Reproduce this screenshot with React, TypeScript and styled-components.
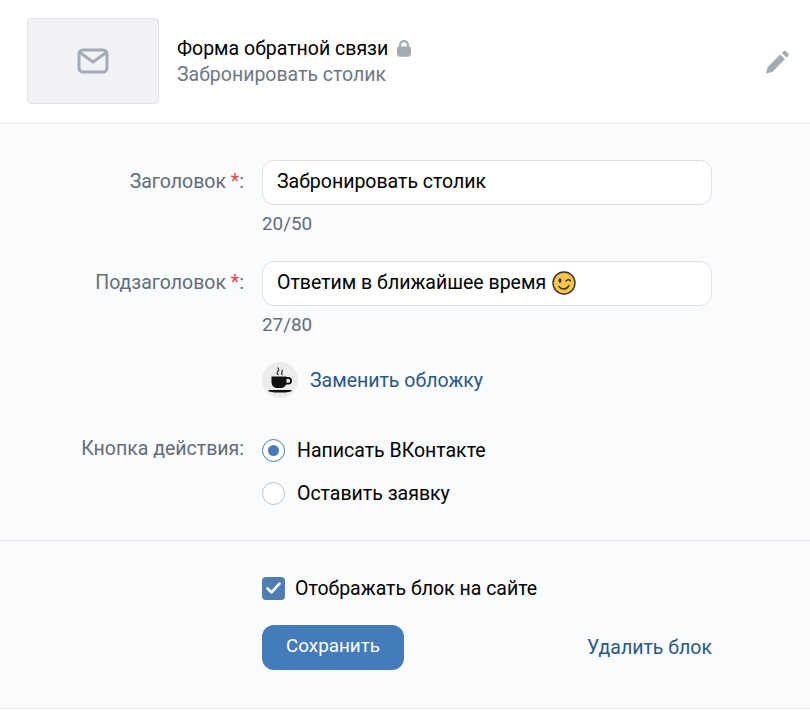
import React from "react";
import styled, { createGlobalStyle } from "styled-components";

const Global = createGlobalStyle`
  html, body { margin: 0; padding: 0; background: #fff; }
  body { font-family: Roboto, "Liberation Sans", sans-serif; font-size: 19.5px; color: #000; }
`;
const Page = styled.div`width: 810px; height: 710px; overflow: hidden; background: #fff;`;
const Header = styled.header`
  height: 123px; display: flex; align-items: center; padding: 0 21px 0 27px;
  border-bottom: 1px solid #e7e8ec; background: #fff;
`;
const Cover = styled.div`
  width: 132px; height: 86px; box-sizing: border-box; border: 1px solid #e1e3e6; border-radius: 4px;
  background: #f0f2f5; display: flex; align-items: center; justify-content: center; margin-right: 18px; margin-bottom: 1px;
`;
const HeaderText = styled.div`flex: 1; display: flex; flex-direction: column; gap: 2px;`;
const Title = styled.div`display: flex; align-items: center; gap: 8px; line-height: 24px; height: 24px;`;
const Subtitle = styled.div`color: #6d7885; line-height: 24px; height: 24px;`;
const Body = styled.div`background: #fafbfd; border-bottom: 1px solid #e7e8ec; padding-bottom: 38px;`;
const Section = styled.section<{ $pad?: string }>`padding: ${p => p.$pad || "0"};`;
const Row = styled.div<{ $mb?: number }>`
  display: grid; grid-template-columns: 244px 450px; column-gap: 18px; margin-bottom: ${p => p.$mb ?? 0}px;
`;
const Label = styled.div<{ $flush?: boolean }>`
  text-align: right; color: #626d7a; line-height: 24px; padding-top: ${p => (p.$flush ? 0 : 10)}px;
  margin-top: ${p => (p.$flush ? -1 : 0)}px;
`;
const Star = styled.span`color: #e64646;`;
const Input = styled.div`
  height: 45px; box-sizing: border-box; background: #fff; border: 1px solid #dce1e6; border-radius: 12px;
  padding: 0 14px 1px; display: flex; align-items: center; gap: 6px; line-height: 24px;
`;
const Counter = styled.div`color: #626d7a; font-size: 18.85px; line-height: 24px; margin-top: 7px;`;
const CoverLink = styled.div`display: flex; align-items: center; gap: 12px; color: #2a5885; height: 36px;`;
const RadioRow = styled.label<{ $mt?: number }>`display: flex; align-items: center; gap: 12px; height: 24px; margin-top: ${p => p.$mt ?? 0}px;`;
const Radio = styled.span<{ $on?: boolean }>`
  width: 23px; height: 23px; box-sizing: border-box; border-radius: 50%; background: #fff;
  border: 1px solid ${p => (p.$on ? "#447bba" : "#b8c1cc")}; display: flex; align-items: center; justify-content: center;
  &::after { content: ""; width: 11px; height: 11px; border-radius: 50%; background: ${p => (p.$on ? "#447bba" : "transparent")}; }
`;
const Divider = styled.hr`margin: 0; border: 0; border-top: 1px solid #e7e8ec;`;
const Spacer = styled.div`height: 35px;`;
const CheckRow = styled.label`display: flex; align-items: center; gap: 10px; height: 24px;`;
const CheckBox = styled.span`
  width: 23px; height: 23px; border-radius: 4px; background: #4f7db5; display: flex; align-items: center; justify-content: center;
`;
const Actions = styled.div`display: flex; align-items: center; justify-content: space-between; margin-top: 25px;`;
const SaveButton = styled.button`
  width: 142px; height: 45px; border: 0; border-radius: 12px; background: #447bba; color: #fff;
  font: 400 18.85px Roboto, sans-serif; padding: 0 0 3px;
`;
const DeleteLink = styled.span`color: #2a5885; line-height: 24px;`;

const MailIcon = () => (
  <svg width="32" height="26" viewBox="0 0 32 26" fill="none" stroke="#a3abb6" strokeWidth="3" strokeLinecap="round" strokeLinejoin="round">
    <rect x="2" y="2" width="28" height="22" rx="4" />
    <path d="M3.5 5 L16 14 L28.5 5" />
  </svg>
);
const LockIcon = () => (
  <svg width="16" height="17" viewBox="0 0 16 17">
    <path fill="#a3abb6" fillRule="evenodd" d="M3 6.5V5a5 5 0 0 1 10 0v1.5c1.3.2 2 1 2 2.4v4.7c0 2-1 3.1-3.1 3.1H4.100C2 16.700 1 15.600 1 13.600V8.900c0-1.400.7-2.200 2-2.400ZM5.200 6.400h5.600V5a2.800 2.800 0 0 0-5.600 0Z" />
  </svg>
);
const PencilIcon = () => (
  <svg width="24" height="24" viewBox="0 0 24 24">
    <path fill="#a3abb6" d="M1 23.500l1.600-6.300L15.200 4.600l4.700 4.700L7.300 21.900ZM16.900 2.900l1.500-1.500a1.900 1.900 0 0 1 2.700 0l2 2a1.900 1.900 0 0 1 0 2.700l-1.500 1.500Z" />
  </svg>
);
const WinkEmoji = () => (
  <svg width="24" height="24" viewBox="0 0 24 24">
    <circle cx="12" cy="12" r="11" fill="#f7c548" stroke="#3a3326" strokeWidth="1.400" />
    <ellipse cx="8" cy="9.500" rx="1.500" ry="2.200" fill="#3a3326" />
    <path d="M14 10c1.200-1.500 3.300-1.500 4.500-.3" fill="none" stroke="#3a3326" strokeWidth="1.500" strokeLinecap="round" />
    <path d="M7 15.500c2.500 3.500 7.500 3.500 10-.8" fill="none" stroke="#3a3326" strokeWidth="1.500" strokeLinecap="round" />
  </svg>
);
const CoffeeIcon = () => (
  <svg width="36" height="36" viewBox="0 0 36 36">
    <circle cx="18" cy="18" r="18" fill="#ececec" />
    <path d="M9.500 14.500h15v5.500c0 3.500-2.500 6-5.500 6h-4c-3 0-5.500-2.500-5.500-6Z" fill="#111" />
    <path d="M24 16h2.300a2.800 2.800 0 0 1 0 5.600H23.500" fill="none" stroke="#111" strokeWidth="1.800" />
    <path d="M6.500 28h23v1.200c-3 1.800-20 1.800-23 0Z" fill="#111" />
    <path d="M16 12.500c-2.800-2 2.500-3.500 0-6.500M20 12.500c-1.800-1.500 1.500-2.300 0-4.300" fill="none" stroke="#444" strokeWidth="1.400" strokeLinecap="round" />
  </svg>
);
const CheckIcon = () => (
  <svg width="15" height="12" viewBox="0 0 15 12" fill="none" stroke="#fff" strokeWidth="2.600" strokeLinecap="round" strokeLinejoin="round">
    <path d="M1.500 6.500 5.500 10.300 13.500 1.700" />
  </svg>
);

export default function App() {
  return (
    <Page>
      <Global />
      <Header>
        <Cover><MailIcon /></Cover>
        <HeaderText>
          <Title>Форма обратной связи <LockIcon /></Title>
          <Subtitle>Забронировать столик</Subtitle>
        </HeaderText>
        <PencilIcon />
      </Header>
      <Body>
        <Section $pad="36px 0 0">
          <Row $mb={25}>
            <Label>Заголовок <Star>*</Star>:</Label>
            <div>
              <Input>Забронировать столик</Input>
              <Counter>20/50</Counter>
            </div>
          </Row>
          <Row $mb={25}>
            <Label>Подзаголовок <Star>*</Star>:</Label>
            <div>
              <Input>Ответим в ближайшее время <WinkEmoji /></Input>
              <Counter>27/80</Counter>
            </div>
          </Row>
          <Row $mb={40}>
            <div />
            <CoverLink><CoffeeIcon />Заменить обложку</CoverLink>
          </Row>
          <Row>
            <Label $flush>Кнопка действия:</Label>
            <div>
              <RadioRow><Radio $on />Написать ВКонтакте</RadioRow>
              <RadioRow $mt={19}><Radio />Оставить заявку</RadioRow>
            </div>
          </Row>
        </Section>
        <Spacer />
        <Divider />
        <Section $pad="35px 0 0">
          <Row>
            <div />
            <div>
              <CheckRow><CheckBox><CheckIcon /></CheckBox>Отображать блок на сайте</CheckRow>
              <Actions>
                <SaveButton>Сохранить</SaveButton>
                <DeleteLink>Удалить блок</DeleteLink>
              </Actions>
            </div>
          </Row>
        </Section>
      </Body>
    </Page>
  );
}
